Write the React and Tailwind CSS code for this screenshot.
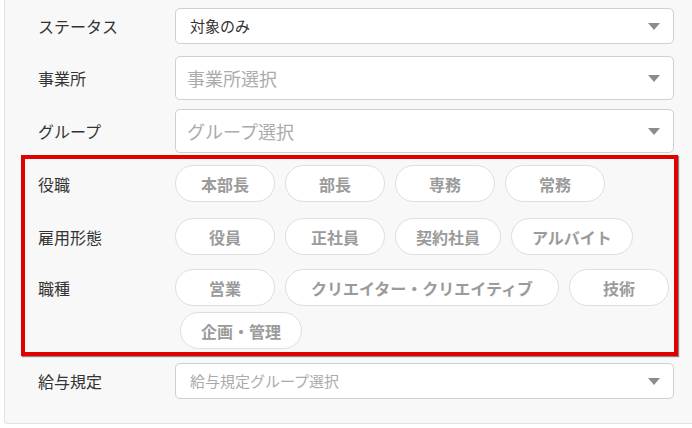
import React from 'react';

const FONT = "font-['Noto_Sans_CJK_JP','Noto_Sans',sans-serif]";

const POSITIONS = ['本部長', '部長', '専務', '常務'];
const EMPLOYMENT = ['役員', '正社員', '契約社員', 'アルバイト'];
const JOBS = ['営業', 'クリエイター・クリエイティブ', '技術', '企画・管理'];

// per-pill tweaks for the 職種 row
const JOB_EXTRA = { 'クリエイター・クリエイティブ': 'px-[25px]', '企画・管理': 'px-5 ml-[5px]' };

const Caret = () => (
  <svg width="12" height="7" viewBox="0 0 12 7" className="shrink-0">
    <path d="M0 0h12L6 7z" fill="#8c8c8c" />
  </svg>
);

const Select = ({ value, placeholder, tall }) => (
  <div
    className={
      tall
        ? 'flex-1 h-[44px] flex items-center justify-between pl-[11px] pr-[13px] bg-white border border-[#cfcfcf] rounded-[5px]'
        : 'flex-1 h-[36px] flex items-center justify-between pl-[14px] pr-[13px] bg-white border border-[#cfcfcf] rounded-[5px]'
    }
  >
    {value ? (
      <span className="text-[15px] text-[#333]">{value}</span>
    ) : (
      <span className={tall ? 'text-[18px] text-[#ababab]' : 'text-[15px] text-[#ababab]'}>{placeholder}</span>
    )}
    <Caret />
  </div>
);

const Row = ({ label, children, className = '' }) => (
  <div className={`flex items-center pl-[17px] pr-[4px] ${className}`}>
    <div className="w-[137px] shrink-0 text-[16px] text-[#333]">{label}</div>
    {children}
  </div>
);

const Pill = ({ text, className = 'px-5' }) => (
  <button
    className={`h-[37px] min-w-[100px] rounded-full bg-white border border-[#dedede] text-[16px] font-bold text-[#9b9b9b] whitespace-nowrap ${className}`}
  >
    {text}
  </button>
);

const PillRow = ({ label, items, extra = {}, className = '' }) => (
  <div className={`flex items-start ${className}`}>
    <div className="w-[137px] shrink-0 h-[37px] flex items-center text-[16px] text-[#333]">{label}</div>
    <div className="flex-1 flex flex-wrap gap-x-[10px] gap-y-[6px]">
      {items.map((t) => (
        <Pill key={t} text={t} className={extra[t] || 'px-5'} />
      ))}
    </div>
  </div>
);

export default function App() {
  return (
    <div className={`w-[692px] h-[428px] overflow-hidden bg-white ${FONT}`}>
      <div className="ml-[4px] w-[691px] bg-[#f8f8f8] border-x border-b border-[#e1e1e1] rounded-b-[4px] pt-2 pb-6 px-4">
        <Row label="ステータス">
          <Select value="対象のみ" />
        </Row>
        <Row label="事業所" className="mt-3">
          <Select placeholder="事業所選択" tall />
        </Row>
        <Row label="グループ" className="mt-[9px]">
          <Select placeholder="グループ選択" tall />
        </Row>

        <div className="mt-[2px] border-4 border-[#e00000] pl-[13px] pt-[6px] pb-[3px] shadow-[1px_1px_1px_rgba(0,0,0,0.45)]">
          <PillRow label="役職" items={POSITIONS} />
          <PillRow label="雇用形態" items={EMPLOYMENT} className="mt-4" />
          <PillRow label="職種" items={JOBS} extra={JOB_EXTRA} className="mt-[14px]" />
        </div>

        <Row label="給与規定" className="mt-[7px]">
          <Select placeholder="給与規定グループ選択" />
        </Row>
      </div>
    </div>
  );
}
